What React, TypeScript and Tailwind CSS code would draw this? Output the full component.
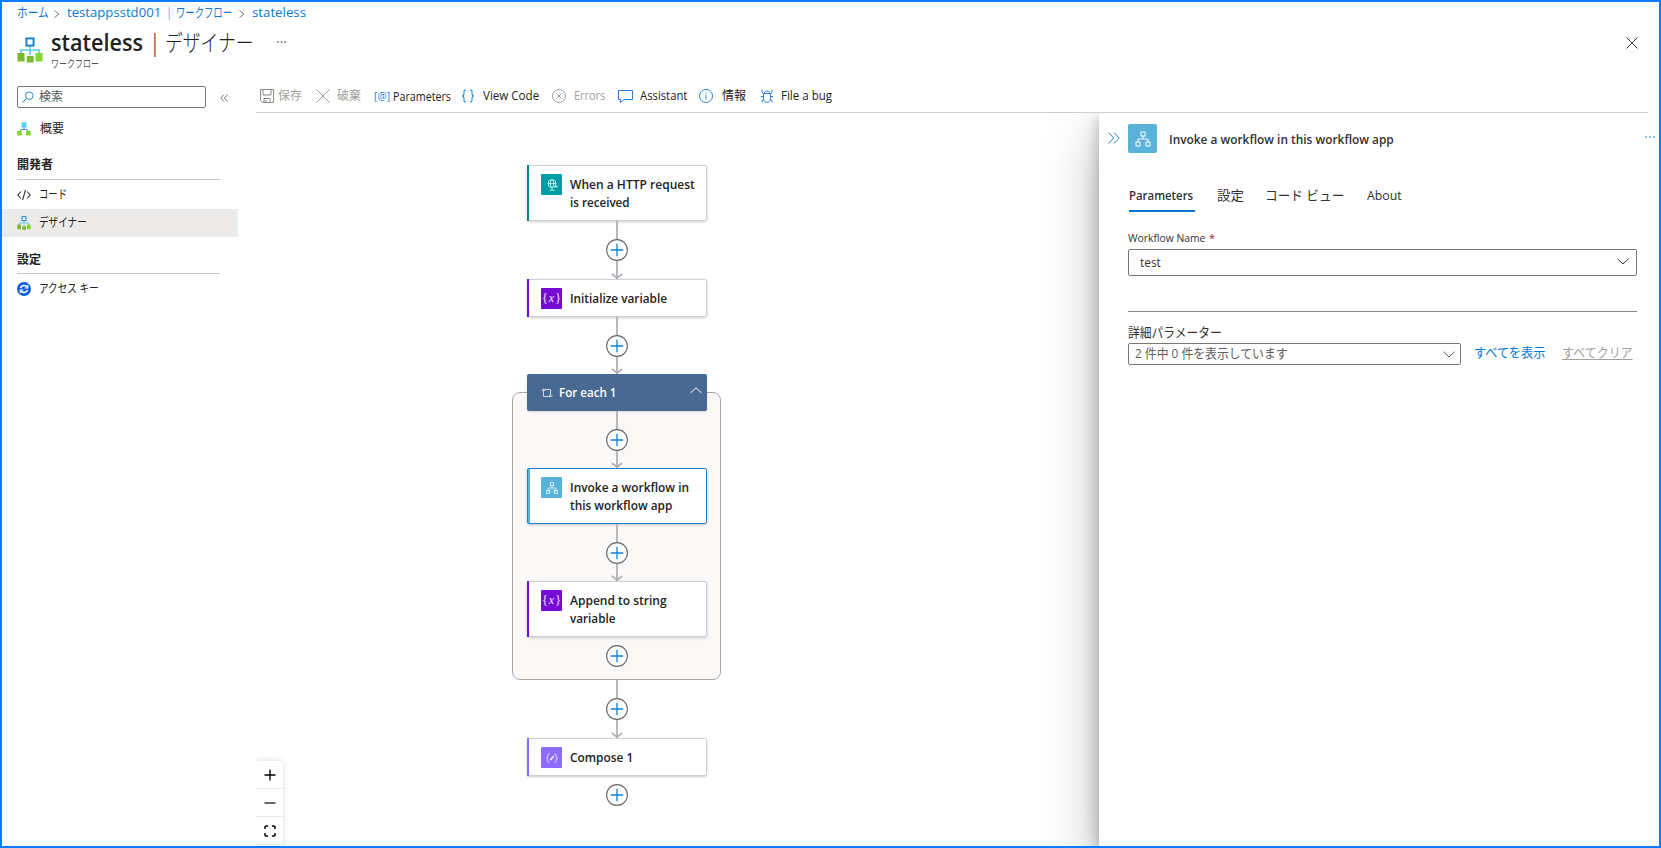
import { useLayoutEffect, useRef, useState } from 'react';
import type { ReactNode } from 'react';
import clsx from 'clsx';

interface FitTextProps {
  children: ReactNode;
  className?: string;
}

// Single line label that is condensed or stretched to fill its own width.
function FitText({ children, className }: FitTextProps) {
  const outerRef = useRef<HTMLSpanElement>(null);
  const innerRef = useRef<HTMLSpanElement>(null);
  const [scale, setScale] = useState(1);

  useLayoutEffect(() => {
    if (outerRef.current && innerRef.current) {
      setScale(outerRef.current.clientWidth / innerRef.current.offsetWidth);
    }
  }, [children]);

  return (
    <span ref={outerRef} className={clsx('block shrink-0 whitespace-nowrap', className)}>
      <span ref={innerRef} className="inline-block origin-left" style={{ transform: `scaleX(${scale})` }}>
        {children}
      </span>
    </span>
  );
}

function WorkflowLogo({ className }: { className?: string }) {
  return (
    <svg viewBox="0 0 26 26" className={className}>
      <path d="M13 9v9M4 17v-4h18v4" fill="none" stroke="#5ccbe9" strokeWidth="1.6" />
      <rect x="9.4" y="1.4" width="7.2" height="7.2" fill="#fff" stroke="#1b84cf" strokeWidth="2" />
      <rect x="0.5" y="16" width="7" height="8.5" fill="#76bc2d" />
      <rect x="9.8" y="19" width="6.800" height="6.500" fill="#76bc2d" />
      <rect x="18.5" y="16" width="7" height="8.5" fill="#86d633" />
    </svg>
  );
}

function OverviewIcon() {
  return (
    <svg viewBox="0 0 14 14" className="h-3.5 w-3.5">
      <path d="M7 5v3M3 9.500l1-2h6l1 2" fill="none" stroke="#4a90c8" strokeWidth="1" />
      <rect x="4.500" y="0.500" width="5" height="5" fill="#4fd2f0" />
      <rect x="0" y="9" width="4.800" height="4.500" fill="#86d633" />
      <rect x="9" y="9" width="4.800" height="4.500" fill="#86d633" />
    </svg>
  );
}

function HierarchyIcon({ className }: { className?: string }) {
  return (
    <svg viewBox="0 0 16 16" className={className} fill="none" stroke="#fff" strokeWidth="1">
      <rect x="6" y="1" width="4" height="4" />
      <rect x="1" y="11" width="4" height="4" />
      <rect x="11" y="11" width="4" height="4" />
      <path d="M8 5v3M3 11V8h10v3" />
    </svg>
  );
}

function Chevron({ className, up }: { className?: string; up?: boolean }) {
  return (
    <svg viewBox="0 0 12 7" className={className} fill="none" stroke="currentColor" strokeWidth="1">
      <path d={up ? 'M.5 6 6 .8 11.500 6' : 'M.5 .8 6 6 11.500 .8'} />
    </svg>
  );
}

const Separator = () => (
  <svg viewBox="0 0 6 8" className="mt-px h-2 w-1.5 shrink-0" fill="none" stroke="#777" strokeWidth="1">
    <path d="M.5.5 5 4 .5 7.500" />
  </svg>
);

function Header() {
  return (
    <header className="h-[78px] shrink-0 pl-[15px]">
      <nav className="flex h-[22px] items-center text-[13px] text-[#0f78cf]">
        <FitText className="w-8">ホーム</FitText>
        <span className="ml-[5px] mr-[7px]"><Separator /></span>
        <FitText className="w-[94px]">testappsstd001</FitText>
        <FitText className="ml-1.5 mr-[5px] w-1">|</FitText>
        <FitText className="w-[56px]">ワークフロー</FitText>
        <span className="ml-[7px] mr-[7px]"><Separator /></span>
        <FitText className="w-[54px]">stateless</FitText>
      </nav>
      <div className="flex">
        <WorkflowLogo className="mt-[13px] h-[26px] w-[26px]" />
        <div className="ml-2 flex h-9 items-center text-[23px] leading-9 text-[#222]">
          <FitText className="w-[92px] font-semibold">stateless</FitText>
          <FitText className="ml-2 w-2">|</FitText>
          <FitText className="ml-1.5 w-[89px] font-light">デザイナー</FitText>
        </div>
        <span className="ml-[22px] mt-1 text-sm text-gray-500">…</span>
        <svg viewBox="0 0 12 12" className="ml-auto mr-[21px] mt-[13px] h-3 w-3" stroke="#444" fill="none">
          <path d="M.5.5l11 11M11.500.5l-11 11" />
        </svg>
      </div>
      <FitText className="-mt-[7px] ml-[34px] w-12 text-[11px] leading-4 text-[#555]">ワークフロー</FitText>
    </header>
  );
}

function Sidebar() {
  return (
    <aside className="flex w-[254px] shrink-0 flex-col text-xs text-[#222]">
      <div className="ml-[15px] mt-1.5 flex items-center">
        <div className="flex h-[22px] w-[189px] items-center rounded-[2px] border border-[#777] pl-1">
          <svg viewBox="0 0 12 12" className="h-3 w-3" fill="none" stroke="#2b88d8" strokeWidth="1">
            <circle cx="7.300" cy="4.700" r="3.800" />
            <path d="M4.500 7.500.5 11.500" />
          </svg>
          <FitText className="ml-[5px] w-6 text-[#555]">検索</FitText>
        </div>
        <svg viewBox="0 0 8 8" className="ml-[14px] mt-px h-2 w-2" fill="none" stroke="#666" strokeWidth=".9">
          <path d="M4 .5.800 4 4 7.500M7.500.5 4.300 4l3.200 3.500" />
        </svg>
      </div>
      <div className="mt-[7px] flex h-7 items-center pl-[15px]">
        <OverviewIcon />
        <FitText className="ml-[9px] w-6">概要</FitText>
      </div>
      <h2 className="ml-[15px] mt-[7px] h-[30px] w-[203px] border-b border-[#c8c8c8] font-bold leading-[30px]">
        <FitText className="w-9">開発者</FitText>
      </h2>
      <div className="flex h-[29px] items-center pl-[15px]">
        <svg viewBox="0 0 14 12" className="h-3 w-3.5" fill="none" stroke="#333" strokeWidth="1.1">
          <path d="M4 2.500.8 6 4 9.500M10 2.500 13.200 6 10 9.500M8.500 1l-3 10" />
        </svg>
        <FitText className="ml-2 w-7">コード</FitText>
      </div>
      <div className="flex h-7 w-[236px] items-center bg-[#edebe9] pl-[15px]">
        <WorkflowLogo className="h-3.5 w-3.5" />
        <FitText className="ml-2 w-[48px]">デザイナー</FitText>
      </div>
      <h2 className="ml-[15px] mt-[7px] h-[30px] w-[203px] border-b border-[#c8c8c8] font-bold leading-[31px]">
        <FitText className="w-6">設定</FitText>
      </h2>
      <div className="flex h-[29px] items-center pl-[15px]">
        <svg viewBox="0 0 14 14" className="h-3.5 w-3.5" fill="none" stroke="#fff" strokeWidth="1.500">
          <circle cx="7" cy="7" r="7" fill="#0f5fd8" stroke="none" />
          <path d="M3.500 6.200C4.200 3.200 8.500 2.700 10 5M10.500 7.800C9.800 10.800 5.500 11.300 4 9" />
          <path d="M10.800 2.800V6H7.600M3.200 11.200V8h3.200" strokeWidth="1.100" />
        </svg>
        <FitText className="ml-2 w-[60px]">アクセス キー</FitText>
      </div>
    </aside>
  );
}

function Toolbar() {
  return (
    <div className="mr-[11px] flex h-[33px] shrink-0 items-center border-b border-[#d2d0ce] pl-1 text-xs text-[#222]">
      <svg viewBox="0 0 14 14" className="h-3.5 w-3.5" fill="none" stroke="#888">
        <path d="M.5.500h13v13H2.500l-2-2zM3 .500v5.500h8V.500M4 13.500V9.500h6v4M6 11v2" />
      </svg>
      <FitText className="ml-1 w-6 text-[#a19f9d]">保存</FitText>
      <svg viewBox="0 0 14 14" className="ml-3.5 h-3.5 w-3.5" fill="none" stroke="#999">
        <path d="M.5.500l13 13M13.500.500l-13 13" />
      </svg>
      <FitText className="ml-[7px] w-6 text-[#a19f9d]">破棄</FitText>
      <FitText className="ml-[13px] w-4 text-[11px] text-[#2b7cd8]">[@]</FitText>
      <FitText className="ml-[3px] mt-0.5 w-[58px]">Parameters</FitText>
      <svg viewBox="0 0 14 14" className="ml-2.5 h-3.5 w-3.5" fill="none" stroke="#2b88d8" strokeWidth="1.100">
        <path d="M5 1C2.500 1 3 2.500 3 4.500S2.500 7 1 7c1.500 0 2 .5 2 2.500S2.500 13 5 13M9 1c2.500 0 2 1.500 2 3.500S11.500 7 13 7c-1.500 0-2 .5-2 2.500s.5 3.500-2 3.500" />
      </svg>
      <FitText className="ml-2 w-14">View Code</FitText>
      <svg viewBox="0 0 14 14" className="ml-[13px] h-3.5 w-3.5" fill="none" stroke="#a19f9d">
        <circle cx="7" cy="7" r="6.500" />
        <path d="M4.500 4.500l5 5M9.500 4.500l-5 5" />
      </svg>
      <FitText className="ml-2 w-[31px] text-[#a19f9d]">Errors</FitText>
      <svg viewBox="0 0 15 14" className="ml-[13px] h-3.5 w-[15px]" fill="none" stroke="#2b7cd8">
        <path d="M.5 1.500h14v9H6L2.500 13.500v-3h-2z" />
      </svg>
      <FitText className="ml-[7px] w-[47px]">Assistant</FitText>
      <svg viewBox="0 0 14 14" className="ml-3 h-3.5 w-3.5" fill="none" stroke="#2b88d8">
        <circle cx="7" cy="7" r="6.500" />
        <path d="M7 6v4.500M7 3.500v1.200" />
      </svg>
      <FitText className="ml-[9px] w-6">情報</FitText>
      <svg viewBox="0 0 14 14" className="ml-[14px] h-3.5 w-3.5" fill="none" stroke="#2b7cd8">
        <path d="M4.500 4C4.500 1.300 9.500 1.300 9.500 4M3.500 4.500h7v5c0 5-7 5-7 0zM3.500 4.500 2 3.300V.800M10.500 4.500 12 3.300V.800M3.500 7.500H.800M10.500 7.500h2.700M3.800 10.500l-1.800 1V13.500M10.200 10.500l1.800 1V13.500" />
      </svg>
      <FitText className="ml-[7px] w-[51px]">File a bug</FitText>
    </div>
  );
}

// Round "+" button that sits on an edge between two steps.
function AddButton() {
  return (
    <svg viewBox="0 0 22 22" className="relative h-[22px] w-[22px] shrink-0" fill="none">
      <circle cx="11" cy="11" r="10.400" fill="#fff" stroke="#666" strokeWidth="1.100" />
      <path d="M11 4.800v12.400M4.800 11h12.400" stroke="#1080d8" strokeWidth="1.300" />
    </svg>
  );
}

function Edge({ className }: { className: string }) {
  return (
    <div className={clsx('relative flex w-full items-center justify-center', className)}>
      <div className="absolute inset-y-0 left-1/2 -ml-px w-0.5 bg-[#b9b7bd]" />
      <svg viewBox="0 0 12 6" className="absolute bottom-0 left-1/2 -ml-1.5 h-1.5 w-3" fill="none" stroke="#b1afb5" strokeWidth="1.700">
        <path d="M.8 1 6 4.900 11.200 1" />
      </svg>
      <AddButton />
    </div>
  );
}

interface StepCardProps {
  icon: ReactNode;
  lines: { text: string; width: string }[];
  className: string;
  iconClass: string;
  barClass: string;
  selected?: boolean;
}

function StepCard({ icon, lines, className, iconClass, barClass, selected }: StepCardProps) {
  return (
    <div
      className={clsx(
        'relative flex w-full shrink-0 rounded-[2px] border bg-white pl-[13px] shadow-[0_1px_3px_rgba(0,0,0,0.2)]',
        selected ? 'border-[#1a80cf]' : 'border-[#d2d0d0]',
        className,
      )}
    >
      <div className={clsx('absolute', selected ? 'inset-y-0 left-0 w-0.5' : '-inset-y-px -left-px w-0.5', barClass)} />
      <div className={clsx('mt-2 flex h-[21px] w-[21px] shrink-0 items-center justify-center rounded-[1px]', iconClass)}>
        {icon}
      </div>
      <div className="ml-2 mt-[9px] text-[13px] font-semibold leading-[18px] text-[#222]">
        {lines.map((line) => (
          <FitText key={line.text} className={line.width}>{line.text}</FitText>
        ))}
      </div>
    </div>
  );
}

const VariableIcon = () => (
  <span className="-mt-0.5 font-['Liberation_Serif',serif] text-[12px] font-normal leading-none text-white/90">
    {'{'}<i className="px-px">x</i>{'}'}
  </span>
);

const ComposeIcon = () => (
  <svg viewBox="0 0 14 12" className="h-3 w-3.5" fill="none" stroke="#e9e2ff" strokeWidth="1">
    <path d="M4.500 1.500C2 1.500 4 5.500 1.500 6c2.500.5 0 4.500 2.500 4.500M9.500 1.500c2.500 0 .5 4 3 4.500-2.500.5-.5 4.500-3 4.500" />
    <path d="M5.300 8.200 8.800 4" strokeWidth="1.800" />
  </svg>
);

const RequestIcon = () => (
  <svg viewBox="0 0 14 14" className="h-3.5 w-3.5" fill="none" stroke="#c9eeee" strokeWidth=".9">
    <circle cx="7" cy="5.500" r="4" />
    <ellipse cx="7" cy="5.500" rx="1.700" ry="4" />
    <path d="M3 5.500h8M7 9.500V12M4.500 12.300h5" />
    <path d="M9.500 8.500h3.200M11.300 7 9.800 8.500l1.500 1.500" strokeWidth="1" />
  </svg>
);

function Flow() {
  return (
    <div className="relative ml-[271px] mt-[52px] flex w-[180px] flex-col items-center">
      <StepCard
        className="h-14"
        barClass="bg-[#00868c]"
        iconClass="bg-[#009da5]"
        icon={<RequestIcon />}
        lines={[{ text: 'When a HTTP request', width: 'w-[125px]' }, { text: 'is received', width: 'w-[60px]' }]}
      />
      <Edge className="h-[58px]" />
      <StepCard
        className="h-[38px]"
        barClass="bg-[#770bd6]"
        iconClass="bg-[#770bd6]"
        icon={<VariableIcon />}
        lines={[{ text: 'Initialize variable', width: 'w-[97px]' }]}
      />
      <Edge className="h-[57px]" />
      <div className="relative flex w-full flex-col items-center">
        <div className="absolute -left-[15px] bottom-0 top-[18px] w-[209px] rounded-lg border border-[#a8a6a4] bg-[#faf9f8]" />
        <div className="relative flex h-[37px] w-full items-center rounded-[2px] bg-[#486991] pl-3.5 pr-[5px] text-white shadow">
          <svg viewBox="0 0 12 10" className="h-2.5 w-3" fill="none" stroke="#dfe6ee" strokeWidth=".9">
            <path d="M3.500 1.500h6v6M.5 3 2.500.8 4 3M2.500 1.500v7M2.500 8.500h7M8 7l1.700 2L11.500 7" />
          </svg>
          <FitText className="ml-[6px] w-[57px] text-[13px] font-semibold">For each 1</FitText>
          <Chevron up className="-mt-1 ml-auto h-[7px] w-3" />
        </div>
        <Edge className="h-[57px]" />
        <StepCard
          selected
          className="h-14"
          barClass="bg-[#59b2d9]"
          iconClass="bg-[#59b2d9]"
          icon={<HierarchyIcon className="h-3 w-3" />}
          lines={[{ text: 'Invoke a workflow in', width: 'w-[119px]' }, { text: 'this workflow app', width: 'w-[102px]' }]}
        />
        <Edge className="h-[57px]" />
        <StepCard
          className="h-14"
          barClass="bg-[#770bd6]"
          iconClass="bg-[#770bd6]"
          icon={<VariableIcon />}
          lines={[{ text: 'Append to string', width: 'w-[97px]' }, { text: 'variable', width: 'w-[45px]' }]}
        />
        <div className="h-[43px] pt-2">
          <AddButton />
        </div>
      </div>
      <Edge className="h-[58px]" />
      <StepCard
        className="h-[38px]"
        barClass="bg-[#8c6cff]"
        iconClass="bg-[#8c6cff]"
        icon={<ComposeIcon />}
        lines={[{ text: 'Compose 1', width: 'w-[63px]' }]}
      />
      <div className="pt-2">
        <AddButton />
      </div>
    </div>
  );
}

function CanvasControls() {
  return (
    <div className="absolute left-0 top-[648px] w-[27px] divide-y divide-[#e8e8e8] rounded-t bg-white shadow-[0_0_6px_rgba(0,0,0,0.15)]">
      <div className="flex h-7 items-center justify-center">
        <svg viewBox="0 0 12 12" className="h-3 w-3" stroke="#000" strokeWidth="1.300"><path d="M6 .5v11M.5 6h11" /></svg>
      </div>
      <div className="flex h-7 items-center justify-center">
        <svg viewBox="0 0 12 12" className="h-3 w-3" stroke="#000" strokeWidth="1.200"><path d="M.5 6h11" /></svg>
      </div>
      <div className="flex h-7 items-center justify-center">
        <svg viewBox="0 0 12 12" className="h-3 w-3" stroke="#000" strokeWidth="1.500" fill="none">
          <path d="M1 4V2q0-1 1-1h2M8 1h2q1 0 1 1v2M11 8v2q0 1-1 1H8M4 11H2q-1 0-1-1V8" />
        </svg>
      </div>
      <div className="h-7" />
    </div>
  );
}

function DetailsPanel() {
  return (
    <section className="absolute bottom-0 right-0 top-0 w-[560px] bg-white pl-[29px] text-[#323130] shadow-[0_24px_54px_rgba(0,0,0,0.28),0_5px_16px_rgba(0,0,0,0.28)]">
      <div className="-ml-5 flex h-[51px] items-center">
        <svg viewBox="0 0 12 12" className="-mt-0.5 h-3 w-3" fill="none" stroke="#2b88d8">
          <path d="M.5.5 5.700 6 .5 11.500M6 .5 11.200 6 6 11.500" />
        </svg>
        <div className="ml-2 flex h-[29px] w-[29px] items-center justify-center rounded-[2px] bg-[#59b2d9]">
          <HierarchyIcon className="h-4 w-4" />
        </div>
        <FitText className="ml-3 mt-0.5 w-[225px] text-[13px] font-semibold">Invoke a workflow in this workflow app</FitText>
        <svg viewBox="0 0 10 2" className="-mt-1 ml-auto mr-1 h-0.5 w-2.5" fill="#2b88d8">
          <path d="M0 .5h2v1H0zM4 .5h2v1H4zM8 .5h2v1H8z" />
        </svg>
      </div>
      <div className="ml-px mt-[14px] flex h-[34px] text-[13px] leading-[34px]">
        <div className="w-[66px] border-b-2 border-[#0078d4]">
          <FitText className="w-16 font-semibold">Parameters</FitText>
        </div>
        <FitText className="ml-[22px] w-[27px]">設定</FitText>
        <FitText className="ml-[21px] w-[79px]">コード ビュー</FitText>
        <FitText className="ml-[23px] w-[35px]">About</FitText>
      </div>
      <div className="mt-4 flex h-[21px] text-[11px] leading-5">
        <FitText className="w-[77px]">Workflow Name</FitText>
        <span className="ml-1 text-[#a4262c]">*</span>
      </div>
      <div className="flex h-[27px] w-[509px] items-center rounded-[2px] border border-[#7a7877] pl-[11px] pr-[7px] text-[13px]">
        <FitText className="w-[21px]">test</FitText>
        <Chevron className="-mt-0.5 ml-auto h-[7px] w-3" />
      </div>
      <div className="mt-[35px] w-[509px] border-t border-[#8a8886]" />
      <FitText className="mt-2.5 h-[21px] w-[94px] text-[13px] leading-5">詳細パラメーター</FitText>
      <div className="flex items-center text-[13px]">
        <div className="flex h-[22px] w-[333px] items-center rounded-[2px] border border-[#7a7877] pl-1.5 pr-[5px] text-[#605e5c]">
          <FitText className="w-[153px]">2 件中 0 件を表示しています</FitText>
          <Chevron className="ml-auto h-[7px] w-3" />
        </div>
        <FitText className="-mt-[3px] ml-[13px] w-[71px] text-[#0078d4]">すべてを表示</FitText>
        <FitText className="-mt-[3px] ml-[17px] w-[71px] text-[#a19f9d] [&>span]:underline [&>span]:underline-offset-2">すべてクリア</FitText>
      </div>
    </section>
  );
}

export default function App() {
  return (
    <div className="flex h-screen w-screen flex-col overflow-hidden border-2 border-[#0a7dff] bg-white font-['Open_Sans','Noto_Sans_CJK_JP',sans-serif]">
      <Header />
      <div className="flex min-h-0 flex-1">
        <Sidebar />
        <main className="flex min-w-0 flex-1 flex-col">
          <Toolbar />
          <div className="relative min-h-0 flex-1 overflow-hidden">
            <Flow />
            <CanvasControls />
            <DetailsPanel />
          </div>
        </main>
      </div>
    </div>
  );
}
